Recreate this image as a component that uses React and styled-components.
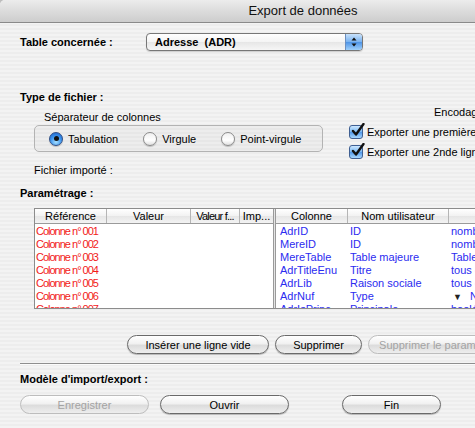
import styled, { createGlobalStyle } from "styled-components";

const GlobalStyle = createGlobalStyle`
  html, body { margin: 0; padding: 0; background: #bdbdbd; }
  body { width: 475px; height: 428px; overflow: hidden; font-family: "Liberation Sans", Arial, sans-serif; }
`;

const pinstripe = `repeating-linear-gradient(to bottom, #ededed 0px, #ededed 2px, #f3f3f3 2px, #f3f3f3 4px)`;

const Window = styled.div`
  width: 606px;
  height: 428px;
  background: ${pinstripe};
  border-radius: 5px 5px 0 0;
  overflow: hidden;
  color: #000;
`;

const TitleBar = styled.div`
  height: 22px;
  line-height: 22px;
  text-align: center;
  font-size: 13px;
  color: #111;
  background: linear-gradient(to bottom, #ececec 0%, #dcdcdc 50%, #cdcdcd 100%);
  border-bottom: 1px solid #8a8a8a;
`;

const Content = styled.div`
  padding-left: 20px;
`;

const Row = styled.div`
  display: flex;
  align-items: center;
  margin-top: ${(p) => p.$top || 0}px;
`;

const Heading = styled.div`
  font-size: 11px;
  font-weight: bold;
  line-height: 13px;
  margin-top: ${(p) => p.$top || 0}px;
  width: ${(p) => (p.$width ? `${p.$width}px` : "auto")};
`;

const Label = styled.div`
  font-size: 11px;
  line-height: 13px;
  margin-top: ${(p) => p.$top || 0}px;
  padding-left: ${(p) => p.$left || 0}px;
  white-space: nowrap;
`;

const Popup = styled.div`
  width: 217px;
  height: 18px;
  box-sizing: border-box;
  border: 1px solid #777;
  border-radius: 4px;
  background: linear-gradient(to bottom, #ffffff 0%, #f4f4f4 50%, #e6e6e6 51%, #f6f6f6 100%);
  display: flex;
  align-items: center;
  justify-content: space-between;
  font-size: 11px;
  font-weight: bold;
  padding-left: 8px;
  box-shadow: 0 1px 1px rgba(0, 0, 0, 0.15);
`;

const Stepper = styled.div`
  width: 16px;
  height: 16px;
  border-radius: 0 3px 3px 0;
  background: linear-gradient(to bottom, #c9e2fb 0%, #77b1ef 50%, #4d93e6 51%, #9fd0fb 100%);
  border-left: 1px solid #6b8fc0;
  display: flex;
  align-items: center;
  justify-content: center;
`;

const FileTypeRow = styled.div`
  display: flex;
`;

const LeftCol = styled.div`
  width: 315px;
  padding-left: 14px;
`;

const RightCol = styled.div`
  display: flex;
  flex-direction: column;
`;

const GroupBox = styled.div`
  margin-top: 1px;
  width: 289px;
  height: 27px;
  box-sizing: border-box;
  border: 1px solid #b3b3b3;
  border-radius: 5px;
  background: rgba(0, 0, 0, 0.025);
  display: flex;
  align-items: center;
  gap: 25px;
  padding-left: 14px;
`;

const Option = styled.label`
  display: flex;
  align-items: center;
  gap: 5px;
  font-size: 11px;
  white-space: nowrap;
`;

const Radio = styled.span`
  width: 14px;
  height: 14px;
  box-sizing: border-box;
  border-radius: 50%;
  border: 1px solid ${(p) => (p.$on ? "#2f4f86" : "#8a8a8a")};
  background: ${(p) =>
    p.$on
      ? "radial-gradient(circle at 50% 75%, #a8e0ff 0%, #3d95ee 50%, #1a5cc4 100%)"
      : "linear-gradient(to bottom, #f0f0f0, #ffffff 60%, #e0e0e0)"};
  display: flex;
  align-items: center;
  justify-content: center;
  box-shadow: 0 1px 1px rgba(0, 0, 0, 0.2);
  &::after {
    content: "";
    display: ${(p) => (p.$on ? "block" : "none")};
    width: 5px;
    height: 5px;
    border-radius: 50%;
    background: #111;
  }
`;

const CheckRow = styled.div`
  display: flex;
  align-items: center;
  gap: 4px;
  margin-top: ${(p) => p.$top || 0}px;
  font-size: 11px;
  white-space: nowrap;
`;

const Check = styled.span`
  width: 14px;
  height: 14px;
  box-sizing: border-box;
  border: 1px solid #3f5f92;
  border-radius: 3px;
  background: linear-gradient(to bottom, #cde8ff 0%, #78b6f2 50%, #4f96e8 51%, #a8d8ff 100%);
  position: relative;
  svg { position: absolute; left: 1px; top: -3px; }
`;

const Frame = styled.div`
  margin-top: 8px;
  margin-left: 14px;
  height: 101px;
  box-sizing: border-box;
  border: 1px solid #8c8c8c;
  border-right: none;
  background: #fff;
  display: flex;
  overflow: hidden;
`;

const Pane = styled.div`
  width: ${(p) => (p.$width ? `${p.$width}px` : "auto")};
  flex: ${(p) => (p.$width ? "none" : "1")};
  display: flex;
  flex-direction: column;
`;

const Splitter = styled.div`
  width: 1px;
  border-left: 1px solid #9a9a9a;
  border-right: 1px solid #9a9a9a;
  background: #e4e4e4;
`;

const HeaderRow = styled.div`
  display: flex;
  height: 14px;
  border-bottom: 1px solid #9a9a9a;
  background: linear-gradient(to bottom, #ffffff 0%, #f2f2f2 50%, #e6e6e6 51%, #f3f3f3 100%);
`;

const HeaderCell = styled.div`
  width: ${(p) => p.$w}px;
  flex: none;
  box-sizing: border-box;
  border-right: 1px solid #b5b5b5;
  font-size: 11px;
  line-height: 14px;
  text-align: center;
  white-space: nowrap;
  overflow: hidden;
  letter-spacing: ${(p) => (p.$tight ? "-0.8px" : "0")};
  &:last-child { border-right: none; }
`;

const Body = styled.div`
  padding-top: 1px;
`;

const DataRow = styled.div`
  display: flex;
  height: 13px;
`;

const Cell = styled.div`
  width: ${(p) => p.$w}px;
  flex: none;
  box-sizing: border-box;
  padding-left: ${(p) => p.$pad || 0}px;
  font-size: 11px;
  line-height: 13px;
  white-space: nowrap;
  overflow: hidden;
  color: ${(p) => p.$color};
  letter-spacing: ${(p) => (p.$tight ? "-1px" : "0")};
`;

const Arrow = styled.span`
  font-size: 9px;
  color: #222;
  margin-left: 2px;
  margin-right: 8px;
`;

const ButtonRow = styled.div`
  display: flex;
  align-items: center;
  gap: ${(p) => p.$gap || 0}px;
  margin-top: ${(p) => p.$top || 0}px;
  padding-left: ${(p) => p.$left || 0}px;
`;

const Button = styled.button`
  width: ${(p) => p.$w}px;
  height: 19px;
  flex: none;
  margin-left: ${(p) => p.$ml || 0}px;
  padding: 0;
  font-family: "Liberation Sans", Arial, sans-serif;
  font-size: 11px;
  color: ${(p) => (p.disabled ? "#a3a3a3" : "#000")};
  border: 1px solid ${(p) => (p.disabled ? "#bdbdbd" : "#6a6a6a")};
  border-radius: 10px;
  background: linear-gradient(to bottom, #ffffff 0%, #f1f1f1 45%, #dcdcdc 55%, #eeeeee 100%);
  box-shadow: ${(p) => (p.disabled ? "none" : "0 1px 1px rgba(0,0,0,0.25)")};
  white-space: nowrap;
  overflow: hidden;
`;

const Separator = styled.div`
  margin-top: 9px;
  height: 0;
  border-top: 1px solid #8e8e8e;
  border-bottom: 1px solid #fbfbfb;
`;

const leftCols = [72, 84, 49, 33];
const rightCols = [72, 101, 120];
const red = "#f21a1a";
const blue = "#2b2bf0";

const rightRows = [
  ["AdrID", "ID", "nombre"],
  ["MereID", "ID", "nombre"],
  ["MereTable", "Table majeure", "Table"],
  ["AdrTitleEnu", "Titre", "tous car"],
  ["AdrLib", "Raison sociale", "tous car"],
  ["AdrNuf", "Type", "Num", true],
  ["AdrIsPrinc", "Principale", "booléen"],
];

const CheckMark = () => (
  <svg width="14" height="14" viewBox="0 0 14 14">
    <path d="M2 8 L5 11.5 L12.5 1" stroke="#111" strokeWidth="2.4" fill="none" strokeLinecap="round" strokeLinejoin="round" />
  </svg>
);

export default function App() {
  return (
    <>
      <GlobalStyle />
      <Window>
        <TitleBar>Export de données</TitleBar>
        <Content>
          <Row $top={10}>
            <Heading $width={126}>Table concernée :</Heading>
            <Popup>
              <span>Adresse&nbsp;&nbsp;(ADR)</span>
              <Stepper>
                <svg width="6" height="10" viewBox="0 0 6 10">
                  <path d="M3 0.5 L5.5 3.5 L0.5 3.5 Z" fill="#111" />
                  <path d="M3 9.5 L5.5 6.5 L0.5 6.5 Z" fill="#111" />
                </svg>
              </Stepper>
            </Popup>
          </Row>

          <Heading $top={40}>Type de fichier :</Heading>
          <FileTypeRow>
            <LeftCol>
              <Label $top={7} $left={10}>Séparateur de colonnes</Label>
              <GroupBox>
                <Option><Radio $on />Tabulation</Option>
                <Option><Radio />Virgule</Option>
                <Option><Radio />Point-virgule</Option>
              </GroupBox>
              <Label $top={12}>Fichier importé :</Label>
            </LeftCol>
            <RightCol>
              <Label $top={2} $left={85}>Encodage :</Label>
              <CheckRow $top={6}>
                <Check><CheckMark /></Check>
                Exporter une première ligne
              </CheckRow>
              <CheckRow $top={6}>
                <Check><CheckMark /></Check>
                Exporter une 2nde ligne
              </CheckRow>
            </RightCol>
          </FileTypeRow>

          <Heading $top={10}>Paramétrage :</Heading>
          <Frame>
            <Pane $width={238}>
              <HeaderRow>
                <HeaderCell $w={leftCols[0]}>Référence</HeaderCell>
                <HeaderCell $w={leftCols[1]}>Valeur</HeaderCell>
                <HeaderCell $w={leftCols[2]} $tight>Valeur f...</HeaderCell>
                <HeaderCell $w={leftCols[3]}>Imp...</HeaderCell>
              </HeaderRow>
              <Body>
                {[1, 2, 3, 4, 5, 6, 7].map((n) => (
                  <DataRow key={n}>
                    <Cell $w={238} $pad={1} $color={red} $tight>
                      Colonne n° {String(n).padStart(3, "0")}
                    </Cell>
                  </DataRow>
                ))}
              </Body>
            </Pane>
            <Splitter />
            <Pane>
              <HeaderRow>
                <HeaderCell $w={rightCols[0]}>Colonne</HeaderCell>
                <HeaderCell $w={rightCols[1]}>Nom utilisateur</HeaderCell>
                <HeaderCell $w={rightCols[2]}>Type</HeaderCell>
              </HeaderRow>
              <Body>
                {rightRows.map((r) => (
                  <DataRow key={r[0]}>
                    <Cell $w={rightCols[0]} $pad={4} $color={blue}>{r[0]}</Cell>
                    <Cell $w={rightCols[1]} $pad={2} $color={blue}>{r[1]}</Cell>
                    <Cell $w={rightCols[2]} $pad={2} $color={blue}>
                      {r[3] && <Arrow>▼</Arrow>}
                      {r[2]}
                    </Cell>
                  </DataRow>
                ))}
              </Body>
            </Pane>
          </Frame>

          <ButtonRow $top={26} $left={107} $gap={6}>
            <Button $w={142}>Insérer une ligne vide</Button>
            <Button $w={87}>Supprimer</Button>
            <Button $w={150} disabled>Supprimer le paramétrage</Button>
          </ButtonRow>

          <Separator />
          <Heading $top={8}>Modèle d'import/export :</Heading>
          <ButtonRow $top={9}>
            <Button $w={129} disabled>Enregistrer</Button>
            <Button $w={129} $ml={11}>Ouvrir</Button>
            <Button $w={99} $ml={53}>Fin</Button>
          </ButtonRow>
        </Content>
      </Window>
    </>
  );
}
